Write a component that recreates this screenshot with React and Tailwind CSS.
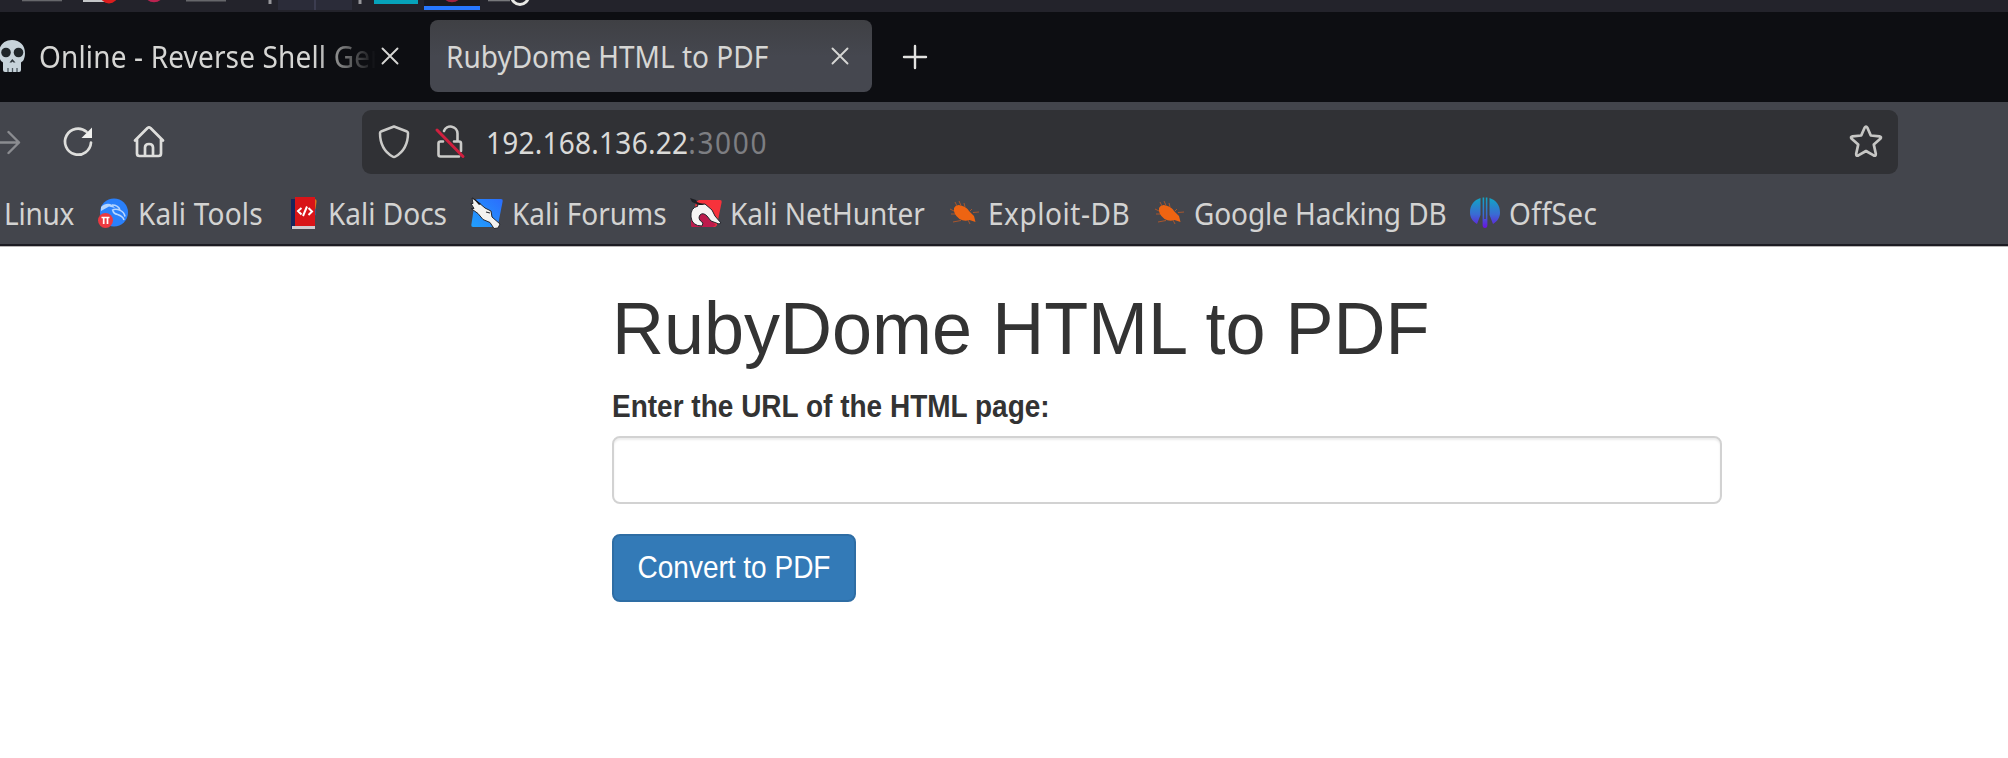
import React from "react";

function T({ children, className = "" }) {
  return (
    <span className={"inline-block shrink-0 whitespace-nowrap origin-[0_78%] translate-y-px scale-y-[1.09] " + className}>{children}</span>
  );
}

function TopPanel() {
  return (
    <svg className="block h-3 w-full shrink-0 bg-[#23232b]" height="12">
      <rect x="22" y="0" width="40" height="1.3" fill="#66676b" />
      <rect x="83" y="0" width="24" height="2" fill="#c4c6c8" />
      <circle cx="109" cy="-5.5" r="9" fill="#dc1d1d" />
      <circle cx="154" cy="-8" r="10.3" fill="#bb2350" />
      <rect x="186" y="0" width="40" height="1.5" fill="#66676b" />
      <rect x="268.500" y="0" width="3" height="4" fill="#97979b" />
      <rect x="278" y="0" width="74" height="10" fill="#2b2c39" />
      <rect x="314" y="0" width="2" height="10" fill="#3c3d50" />
      <rect x="358.500" y="0" width="3" height="4" fill="#97979b" />
      <rect x="374" y="0" width="44" height="4" fill="#06a3ba" />
      <rect x="424" y="0" width="56" height="6" fill="#1a1a20" />
      <circle cx="452" cy="-8" r="10.300" fill="#9f2343" />
      <rect x="424" y="6" width="56" height="4" fill="#2777ff" />
      <rect x="488" y="0" width="22" height="1.300" fill="#77787b" />
      <circle cx="520" cy="-4" r="8.500" fill="#23232b" stroke="#e8e8e4" strokeWidth="3" />
    </svg>
  );
}

function Close() {
  return (
    <svg width="18" height="18" viewBox="0 0 18 18" className="block shrink-0" stroke="#d6d6d4" strokeWidth="1.9" strokeLinecap="round">
      <path d="M1.500 1.500 16.500 16.500M16.500 1.500 1.500 16.500" />
    </svg>
  );
}

function Skull() {
  return (
    <svg width="30" height="34" viewBox="0 0 30 34" className="-ml-[3px] block shrink-0">
      <path d="M15 1C7 1 2 6.500 2 14c0 3 .5 4.500 1 6 .5 2 2 2.500 3 3.500V31q0 2 2 2h14q2 0 2-2v-7.500c1-1 2.500-1.500 3-3.500.5-1.500 1-3 1-6C28 6.500 23 1 15 1Z" fill="#c7d3da" />
      <circle cx="9" cy="13.500" r="4.800" fill="#20262a" />
      <circle cx="21.500" cy="13.500" r="4.800" fill="#20262a" />
      <path d="M15.300 20 12.500 23.500h2l1-1 1 1h2Z" fill="#2e363b" />
      <path d="M11 29v4M15.500 29v4M20 29v4" stroke="#4a555c" strokeWidth="1.300" />
    </svg>
  );
}

function TabStrip() {
  return (
    <div className="flex h-[90px] shrink-0 items-start bg-[#0d0e12] pt-2">
      <div className="flex h-[72px] w-[430px] shrink-0 items-center">
        <Skull />
        <div className="ml-[12px] flex w-[342px] shrink-0">
          <div className="shrink-0 [mask-image:linear-gradient(to_right,black_275px,transparent_337px)]">
            <T className="tracking-[0.150px]">Online - Reverse Shell Gen</T>
          </div>
        </div>
        <Close />
      </div>
      <div className="flex h-[72px] w-[442px] shrink-0 items-center justify-between rounded-[8px] bg-linear-to-b from-[#3f4044] to-[#45474f] to-50% pl-[16px] pr-[23px]">
        <T>RubyDome HTML to PDF</T>
        <Close />
      </div>
      <div className="ml-[30px] flex h-[74px] items-center">
        <svg width="26" height="26" viewBox="0 0 26 26" stroke="#e2e2e0" strokeWidth="2.400" strokeLinecap="round"><path d="M13 2v22M2 13h22" /></svg>
      </div>
    </div>
  );
}

function NavBar() {
  return (
    <div className="flex h-[80px] shrink-0 items-center">
      <svg width="22" height="30" viewBox="0 0 22 30" fill="none" stroke="#8b8c90" strokeWidth="2.400" strokeLinecap="round" strokeLinejoin="round" className="shrink-0"><path d="M-2 15.500H19M8.500 5 19 15.500 8.500 26" /></svg>
      <svg width="32" height="32" viewBox="0 0 32 32" fill="none" stroke="#dededc" strokeWidth="2.700" className="ml-[40px] shrink-0"><path d="M24.500 5.800A13 13 0 1 0 29 16.500" strokeLinecap="round" /><path d="M30 1.500V12H19.500Z" fill="#f0f0ee" stroke="none" /></svg>
      <svg width="32" height="34" viewBox="0 0 32 34" fill="none" stroke="#dededc" strokeWidth="2.700" strokeLinecap="round" strokeLinejoin="round" className="ml-[39px] shrink-0"><path d="M2 15.500 14.500 3Q16 1.800 17.500 3L30 15.500M4 14V28.500Q4 31 6.500 31H25.500Q28 31 28 28.500V14M12 31V22.500Q12 19 16 19T20 22.500V31" /></svg>
      <div className="ml-[197px] flex h-16 w-[1536px] shrink-0 items-center rounded-[9px] bg-[#303135]">
        <svg width="32" height="36" viewBox="0 0 32 36" fill="none" stroke="#cbcbc9" strokeWidth="2.500" strokeLinejoin="round" className="ml-4 shrink-0"><path d="M16 2.500 29 7.500Q30 8 30 9C30 19 27 27 17.500 32.500Q16 33.500 14.500 32.500C5 27 2 19 2 9Q2 8 3 7.500Z" /></svg>
        <svg width="32" height="36" viewBox="0 0 32 36" fill="none" className="ml-6 shrink-0">
          <path d="M9 17.500H6.500Q4.500 17.500 4.500 19.500V30.500Q4.500 32.500 6.500 32.500H25M27 27V19.500Q27 17.500 25 17.500H20M23.500 17V9.500a7 7 0 0 0-13.500-2.500" stroke="#cbcbc9" strokeWidth="2.600" strokeLinecap="round" />
          <path d="M3 6 29 32.500" stroke="#d0203f" strokeWidth="3" strokeLinecap="round" />
        </svg>
        <T className="ml-[20px] tracking-[0.250px] text-[#dadad8]">192.168.136.22<span className="tracking-[1.700px] text-[#7d7e82]">:3000</span></T>
        <svg width="36" height="36" viewBox="0 0 36 36" fill="none" stroke="#c6c6c4" strokeWidth="2.700" strokeLinejoin="round" className="ml-auto mr-[14px] shrink-0"><path d="M16.600 3.700Q18 1.500 19.400 3.700L22.800 11.500 31.500 12.300Q34 12.800 32.300 14.800L25.800 20.600 27.800 29.800Q28 32.500 25.600 31.400L18 27 10.400 31.400Q8 32.500 8.200 29.800L10.200 20.600 3.700 14.800Q2 12.800 4.500 12.300L13.200 11.500Z" /></svg>
      </div>
    </div>
  );
}

function ToolsIcon() {
  return (
    <svg width="32" height="32" viewBox="0 0 32 32" className="block">
      <circle cx="17" cy="15.500" r="14" fill="#2a80fb" />
      <path d="M4 10C9 5 15 6 18 11L12 9.500 4 14Z" fill="#b4d4fd" />
      <path d="M15 8c4 0 7 2 8 5M15 13.500c4-3 12 0 13 6M16 14c1 5 9 2 11 9" stroke="#b9d6fe" strokeWidth="1.600" fill="none" />
      <circle cx="8.500" cy="23.500" r="7.500" fill="#ec3941" />
      <path d="M4.500 20.500h8M6.700 20.500V27M10.500 20.500V27" stroke="#fff" strokeWidth="1.700" />
    </svg>
  );
}

function DocsIcon() {
  return (
    <svg width="28" height="34" viewBox="0 0 28 34" className="block">
      <rect x="1" y="3" width="24" height="30" fill="#17255c" />
      <path d="M24 3q3 0 2.500 3l-1 7h-2Z" fill="#e0701a" />
      <path d="M25.500 13v6l-1 1V13Z" fill="#326dbb" />
      <rect x="5" y="1" width="20" height="29" fill="#d81418" />
      <rect x="2" y="30" width="23" height="3" fill="#d0cbd0" />
      <path d="M11.500 12 8 15l3.500 3.500M18.500 12 22 15.500 18.500 19M17 10.500l-4 9.500" stroke="#fff" strokeWidth="2" fill="none" />
    </svg>
  );
}

function ForumsIcon() {
  return (
    <svg width="34" height="32" viewBox="0 0 34 32" className="block">
      <defs><linearGradient id="forum" x1="1" y1="0" x2="0" y2="1"><stop stopColor="#2b6dfd" /><stop offset="1" stopColor="#21a0fc" /></linearGradient></defs>
      <path d="M8 2H31q2 0 1.700 2L28 28q-.5 2-3 2H3q-2 0-1.700-2L5 4q.5-2 3-2Z" fill="url(#forum)" />
      <path d="m2 1 6 4 7 6 6 3 1 6 8 7-2 4-4 .5-4-6-7-3-5-6-7-5 3 0-3-5 2 0Z" fill="#f4f2ef" stroke="#26272d" strokeWidth="1" />
      <path d="m2 0 9 7-2 1Z" fill="#18191e" />
      <path d="m16 15 4 1" stroke="#26272d" strokeWidth="1.200" />
    </svg>
  );
}

function HunterIcon() {
  return (
    <svg width="34" height="32" viewBox="0 0 34 32" className="block">
      <path d="M10 3H31q2 0 1.700 2L28 28q-.5 2-3 2H4q-2 0-1.700-2L7 5Z" fill="#f7323b" />
      <path d="M2 20V28q0 2 2 2h20l3-2-12-12Z" fill="#bd1b4c" />
      <path d="m8 7 8 0 7 6 3 6 6 7-2 1-8-3-4-5q-4-4-7-1-3 4 3 8l-1 3Q3 29 2 20 1 11 9 9Z" fill="#f6f4f3" stroke="#24252c" strokeWidth="1" />
      <path d="m1 1 6 2 1 2 8 3-6 0-7-3Z" fill="#1d1e23" />
    </svg>
  );
}

function BugIcon() {
  return (
    <svg width="34" height="30" viewBox="0 0 34 30" className="block" fill="#ee6412">
      <path d="M6 10Q8 6 13 7.500q6 1.500 8 5.500l5 5 1.500 6-6-2q-5 2-10-1Q5 16 6 10Z" />
      <path d="M9 8 7 4M13 7.500 11 3M17 9l-1-4M22 13l2-2M25 14.500l6-.5M6 13l-4-2M7 16l-4 0M13 22.500l-8 1.500M20 22l2 4" stroke="#a9562c" strokeWidth="1" />
    </svg>
  );
}

function OffSecIcon() {
  return (
    <svg width="32" height="34" viewBox="0 0 32 34" className="block">
      <defs><linearGradient id="offsec" gradientUnits="userSpaceOnUse" x1="0" y1="2" x2="0" y2="32"><stop stopColor="#12a5c6" /><stop offset=".55" stopColor="#3a6bd3" /><stop offset="1" stopColor="#6a11df" /></linearGradient></defs>
      <g fill="url(#offsec)">
        <path d="M11.500 2V19L8 28C3 25 1 21 1 16.500 1 9 5 4 11.500 2ZM20.500 2V19L24 28c5-3 7-7 7-11.500C31 9 27 4 20.500 2Z" />
        <path d="M13.600 1.500h1.600V23h1.600V1.500h1.600V29q0 3-2.400 3t-2.400-3Z" />
      </g>
    </svg>
  );
}

function Bookmark({ icon, label, className, gap }) {
  return (
    <div className={"flex shrink-0 items-center " + className}>
      {icon}
      <T className={gap}>{label}</T>
    </div>
  );
}

function Bookmarks() {
  return (
    <div className="flex h-[62px] shrink-0 items-center text-[#d3d3d2]">
      <Bookmark className="w-[92px] pl-[4px]" gap="tracking-[-0.250px]" label="Linux" />
      <Bookmark className="w-[198px] pl-[5px]" icon={<ToolsIcon />} gap="ml-[9px] tracking-[0.200px]" label="Kali Tools" />
      <Bookmark className="w-[180px]" icon={<DocsIcon />} gap="ml-[10px]" label="Kali Docs" />
      <Bookmark className="w-[219px]" icon={<ForumsIcon />} gap="ml-[8px]" label="Kali Forums" />
      <Bookmark className="w-[257px]" icon={<HunterIcon />} gap="ml-[7px]" label="Kali NetHunter" />
      <Bookmark className="w-[206px] pl-[2px]" icon={<BugIcon />} gap="ml-[6px] tracking-[0.550px]" label="Exploit-DB" />
      <Bookmark className="w-[317px] pl-[1px]" icon={<BugIcon />} gap="ml-[7px] tracking-[-0.100px]" label="Google Hacking DB" />
      <Bookmark icon={<OffSecIcon />} gap="ml-[8px] tracking-[0.450px]" label="OffSec" className="" />
    </div>
  );
}

export default function App() {
  return (
    <div className="flex h-[758px] w-[2008px] flex-col overflow-hidden bg-white">
      <header className="flex shrink-0 flex-col bg-[#43454c] font-['Noto_Sans',sans-serif] text-[28px] leading-[38px] text-[#d6d6d4]">
        <TopPanel />
        <TabStrip />
        <NavBar />
        <Bookmarks />
        <div className="h-[3px] border-b border-[#b9b6b6] bg-[#1c1b22]" />
      </header>
      <main className="ml-[612px] flex w-[1110px] flex-col items-start font-['Liberation_Sans',sans-serif] text-[28px] leading-10 text-[#333]">
        <h1 className="mt-[42px] origin-[0_80%] scale-y-[1.03] text-[72px] leading-[80px]">RubyDome HTML to PDF</h1>
        <label className="mt-[18px] font-bold"><T>Enter the URL of the HTML page:</T></label>
        <input className="mt-[9px] h-[68px] w-full rounded-[8px] border-2 border-[#d2d2d2] px-6 shadow-[inset_0_2px_2px_rgba(0,0,0,0.075)] outline-none" />
        <button className="mt-[30px] h-[68px] w-[244px] rounded-[8px] border-2 border-[#2e6da4] bg-[#337ab7] text-white"><T>Convert to PDF</T></button>
      </main>
    </div>
  );
}
